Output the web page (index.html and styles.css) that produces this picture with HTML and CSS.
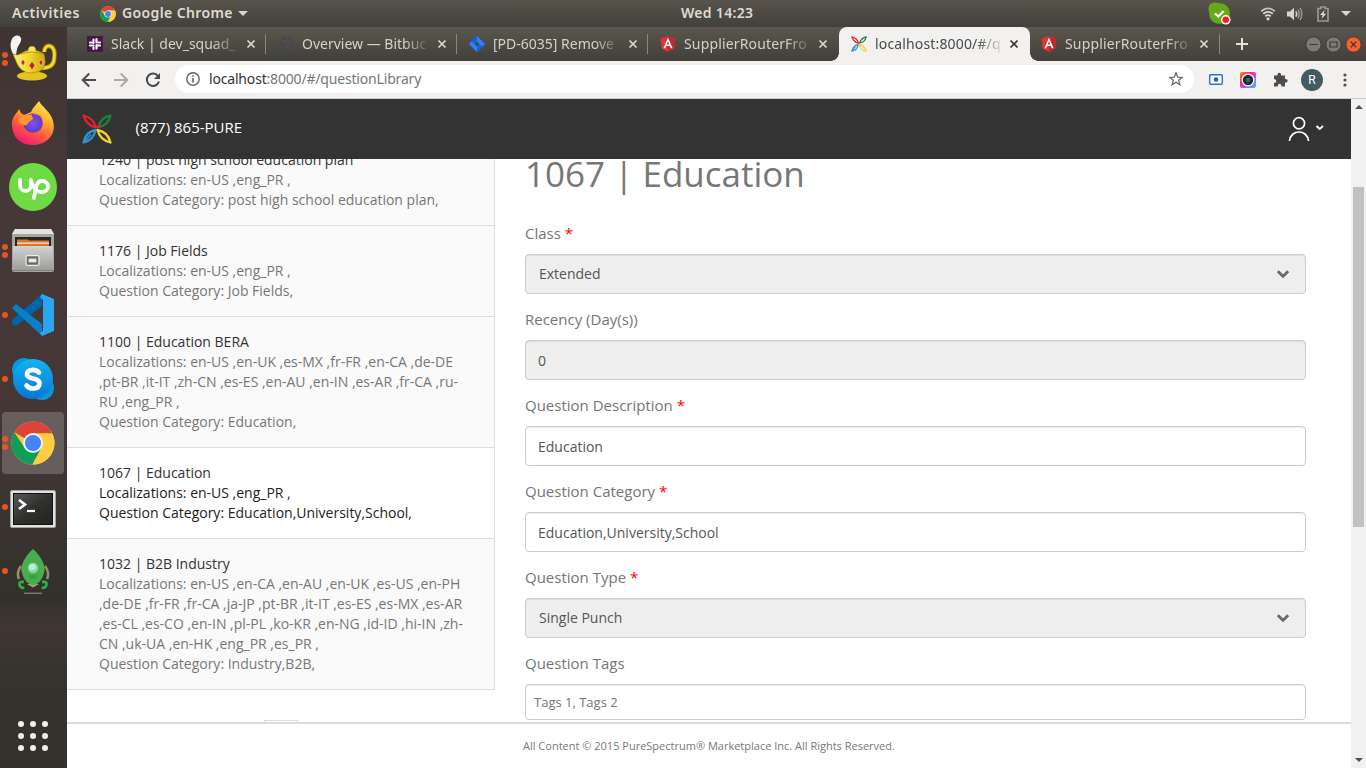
FILE: index.html
```html
<!DOCTYPE html>
<html lang="en">
<head>
<meta charset="utf-8">
<title>Question Library</title>
<link rel="stylesheet" href="styles.css">
</head>
<body>
<svg class="defs" width="0" height="0">
  <defs>
    <symbol id="chrome" viewBox="0 0 48 48">
      <circle cx="24" cy="24" r="23.5" fill="#fcc93c"/>
      <path d="M24 24 3.6 12.3A23.5 23.5 0 0 1 44.4 12.6L44.7 13.5H24Z" fill="#db4437"/>
      <path d="M3.6 12.3A23.5 23.5 0 0 0 23.5 47.5L33.2 29.5 14.8 29.3Z" fill="#0f9d58"/>
      <path d="M24 13.5H45A23.5 23.5 0 0 1 23.5 47.5L33.2 29.5Z" fill="#ffcd40"/>
      <circle cx="24" cy="24" r="10.8" fill="#f5f5f5"/>
      <circle cx="24" cy="24" r="8.8" fill="#4285f4"/>
    </symbol>
    <symbol id="spectrum" viewBox="0 0 30 30">
      <g fill="none" stroke-width="2.3" stroke-linejoin="round">
        <path d="M13.500 16Q4 17.500 1.500 28.500 11.500 26.500 13.500 16Z" stroke="#2b93d1"/>
        <path d="M2 28 9 20.500" stroke="#2b93d1" stroke-width="1.800"/>
        <path d="M15.500 16Q18 26 28.500 28.500 26 18 15.500 16Z" stroke="#f2d22e"/>
        <path d="M28.500 1.500Q18.500 3.500 16.500 13 26 11.500 28.500 1.500Z" stroke="#1d803c"/>
        <path d="M13.500 12.500Q11.500 4 1.500 1.500 5 11 12 13 15.500 13.800 18.500 11.500" stroke="#e2202c"/>
      </g>
    </symbol>
    <symbol id="angular" viewBox="0 0 16 16">
      <path d="M8 0 15.5 2.6 14.3 12.5 8 16 1.7 12.5.5 2.6Z" fill="#e23237"/>
      <path d="M8 0 15.5 2.6 14.3 12.5 8 16Z" fill="#b52e31"/>
      <path d="M8 1.8 3.4 12.2h1.8l.9-2.3h3.8l.9 2.3h1.8ZM8 5.2 9.3 8.4H6.7Z" fill="#fff" fill-rule="evenodd"/>
    </symbol>
    <symbol id="close" viewBox="0 0 10 10"><path d="M1.5 1.5 8.5 8.5M8.5 1.5 1.5 8.5" fill="none" stroke="currentColor" stroke-width="1.7"/></symbol>
    <symbol id="chevron" viewBox="0 0 14 10"><path d="M1.8 2.2 7 7.2 12.2 2.2" fill="none" stroke="#666a70" stroke-width="2.8"/></symbol>
    <linearGradient id="gold" x1="0" x2="1"><stop offset="0" stop-color="#fbf07a"/><stop offset=".5" stop-color="#f0d829"/><stop offset="1" stop-color="#c9a90c"/></linearGradient>
    <linearGradient id="fox" x1=".8" y1="0" x2=".3" y2="1"><stop offset="0" stop-color="#fff14f"/><stop offset=".35" stop-color="#ffb02e"/><stop offset=".65" stop-color="#ff5e3a"/><stop offset="1" stop-color="#f2127b"/></linearGradient>
    <radialGradient id="globe"><stop offset="0" stop-color="#8a4df0"/><stop offset="1" stop-color="#5b3cc4"/></radialGradient>
    <linearGradient id="metal" y1="0" x2="0" y2="1"><stop offset="0" stop-color="#d2d2d0"/><stop offset="1" stop-color="#9b9b99"/></linearGradient>
    <linearGradient id="sky" y1="0" x2="0" y2="1"><stop offset="0" stop-color="#13b4f1"/><stop offset="1" stop-color="#0778d4"/></linearGradient>
    <linearGradient id="screen" x2="1" y2="1"><stop offset="0" stop-color="#5b5b59"/><stop offset=".5" stop-color="#30302e"/><stop offset="1" stop-color="#222"/></linearGradient>
    <linearGradient id="rainbow" x2="1" y2="1"><stop offset="0" stop-color="#ff8a00"/><stop offset=".3" stop-color="#ff2f4e"/><stop offset=".55" stop-color="#e236e8"/><stop offset="1" stop-color="#19d8ee"/></linearGradient>
  </defs>
</svg>

<div class="desktop">
  <header class="topbar">
    <div class="topbar-left">
      <span class="activities">Activities</span>
      <svg class="app-icon" width="16" height="16"><use href="#chrome"/></svg>
      <span class="app-name">Google Chrome</span>
      <i class="caret"></i>
    </div>
    <span class="clock">Wed 14:23</span>
    <div class="tray">
      <svg width="23" height="23" viewBox="0 0 23 23"><rect x=".5" y=".5" width="13" height="13" rx="6" fill="#65a91a"/><circle cx="11.5" cy="11.5" r="10.5" fill="#65a91a"/><path d="M7 11.5 10.3 14.5 15.7 9" stroke="#fff" stroke-width="2.2" fill="none"/><circle cx="17.8" cy="17.8" r="4.8" fill="#fff"/><circle cx="17.8" cy="17.8" r="3.3" fill="#f0201c"/></svg>
      <svg class="wifi" width="16" height="14" viewBox="0 0 16 14" fill="none" stroke="#d8d6d0" stroke-width="1.8"><path d="M1.2 4.2Q8-1.4 14.8 4.2" opacity=".85"/><path d="M3.2 6.8Q8 3 12.8 6.8"/><path d="M5.2 9.2Q8 7 10.8 9.2"/><circle cx="8" cy="11.8" r="1.6" fill="#d8d6d0" stroke="none"/></svg>
      <svg class="volume" width="16" height="14" viewBox="0 0 16 14"><path d="M0 4.5H3L7 .8V13.2L3 9.5H0Z" fill="#d8d6d0"/><path d="M8.8 4.3Q10.6 7 8.8 9.7" stroke="#d8d6d0" stroke-width="1.5" fill="none"/><path d="M11 2.6Q13.4 7 11 11.4M13.2 1Q16.4 7 13.2 13" stroke="#99968f" stroke-width="1.5" fill="none"/></svg>
      <svg class="battery" width="12" height="16" viewBox="0 0 12 16"><path d="M1 2.5H3.8V1H8.2V2.5H11V15H1Z" fill="none" stroke="#9a9891" stroke-width="1.7"/><path d="M7.8 4 3 9.1H5.6L4.4 13 9.2 7.8H6.6Z" fill="#dfddd6"/></svg>
      <i class="caret"></i>
    </div>
  </header>

  <div class="workspace">
    <nav class="dock">
      <div class="slot two">
        <svg width="50" height="50" viewBox="0 0 50 50"><path d="M5 20C2 14 2 9 4 5 6 1 11 0 13 4 14 8 10 11 9 15L8 21Z" fill="#f4f4f4"/><path d="M36 18Q37 11 42 12 48 14 46 26 45 34 34 34" fill="none" stroke="#a8890a" stroke-width="4.5"/><path d="M36 18Q37 11 42 12 48 14 46 26 45 34 34 34" fill="none" stroke="#f1da2f" stroke-width="2.8"/><ellipse cx="24" cy="42" rx="15" ry="4.5" fill="#e2c61e"/><path d="M5 20Q10 22 12 20 24 12 36 20 41 38 24 39 12 39 8 27Z" fill="url(#gold)" stroke="#ad8d0a" stroke-width=".7"/><circle cx="24" cy="16" r="3.7" fill="#f4e463"/><path d="M13 20Q24 16 35 20" stroke="#b69810" fill="none"/><path d="m15 25 2 3.5-2 3.5-2-3.5ZM24 27l3 4.5-3 4.5-3-4.5ZM33 25l2 3.5-2 3.5-2-3.5Z" fill="#c8202b" stroke="#f7eb91" stroke-width=".6"/></svg>
      </div>
      <div class="slot">
        <svg width="44" height="46" viewBox="0 0 44 46"><path d="M1 24C1 16 5 15 8 9L10 13 13 15 20 12C22 7 26 4 28 1 31 7 40 12 42 21 46 36 34 45 22 45 8 45 1 36 1 24Z" fill="url(#fox)"/><circle cx="22" cy="23" r="9.800" fill="url(#globe)"/><path d="M24 13Q31 13 33 20 28 13 20 14Q22 18 22 19 16 23 16 25 10 26 7 20 10 16 21 14Z" fill="#ff9730"/></svg>
      </div>
      <div class="slot">
        <svg width="48" height="48" viewBox="0 0 48 48"><circle cx="24" cy="24" r="24" fill="#6fda44"/><path d="M11 17V22C11 30 22 30 22 22V17C25 27 28 29 33 29 41 29 41 18 33 18 27 18 27 25 25 35" fill="none" stroke="#fff" stroke-width="3.8" stroke-linecap="round" stroke-linejoin="round"/></svg>
      </div>
      <div class="slot two">
        <svg width="44" height="46" viewBox="0 0 44 46"><path d="M4 1H40L43 6V42Q43 44 41 44H3Q1 44 1 42V6Z" fill="#a5a5a3"/><path d="M4 1H40L43 6H1Z" fill="#e2e2e0"/><path d="M4 9H40V19H4Z" fill="#262624"/><path d="M6 11.500H17L18 12.500H38V19H6Z" fill="#d9762a"/><path d="M6 14.500H38V15.800H6Z" fill="#f6e5d4"/><path d="M2 18H42V42Q42 43 41 43H3Q2 43 2 42Z" fill="url(#metal)"/><path d="M1 42.500H43" stroke="#81817f"/><rect x="15" y="27.500" width="13" height="10" rx="1.500" fill="#888" stroke="#ededeb" stroke-width="1.200"/><rect x="17" y="30" width="9" height="5" fill="#e9e9e7" stroke="#4a4a48"/></svg>
      </div>
      <div class="slot one">
        <svg width="44" height="44" viewBox="0 0 44 44"><path d="M1 27 31 1V13L5 33 1 31Z" fill="#0065a9"/><path d="M1 15 5 11 31 31V43Z" fill="#0a7ec9"/><path d="M31 1 43 6V38L31 43 29 40 32 38V7L29 4Z" fill="#2aa6f0"/></svg>
      </div>
      <div class="slot one">
        <svg width="44" height="44" viewBox="0 0 44 44"><circle cx="13" cy="13" r="12" fill="#0799db"/><circle cx="31" cy="31" r="12" fill="#0799db"/><circle cx="22" cy="22" r="20" fill="url(#sky)"/><path d="M28 15.500C24 11.500 16 12 16 17.500 16 23 28.500 20 28.500 26.500 28.500 32.500 19 33 15.500 28.500" fill="none" stroke="#fff" stroke-width="4.600" stroke-linecap="round"/></svg>
      </div>
      <div class="slot two active"><svg width="44" height="44"><use href="#chrome"/></svg></div>
      <div class="slot one terminal">
        <svg width="46" height="38" viewBox="0 0 46 38"><rect x=".5" y=".5" width="45" height="37" rx="1.500" fill="#e2e2e0" stroke="#a2a2a0"/><rect x="3.500" y="3.500" width="39" height="31" fill="url(#screen)" stroke="#111"/><path d="M9 10 15 14.500 9 19" stroke="#fff" stroke-width="2.600" fill="none"/><path d="M17 21H25" stroke="#fff" stroke-width="2.200"/></svg>
      </div>
      <div class="slot one">
        <svg width="36" height="46" viewBox="0 0 36 46"><path d="M6 18Q1 24 4 31M30 18Q35 24 32 31" stroke="#9b8d62" stroke-width="2.600" fill="none"/><path d="M12 36 18 39.500 24 36Z" fill="#b3a276"/><path d="M18 1C25 7 32 18 29 25 27 33 22 37 18 37S9 33 7 25C4 18 11 7 18 1Z" fill="#48ad4c"/><circle cx="18" cy="20" r="5.200" fill="#80d8a6"/><circle cx="17.500" cy="19" r="3.300" fill="#b8eddb"/><path d="M14 28H22M15 30H21" stroke="#267c31" stroke-dasharray="1.500 1"/><path d="M9 34Q3 33 5 38 7 41 9 39M27 34Q33 33 31 38 29 41 27 39" fill="none" stroke="#2fae4c" stroke-width="2.800"/><path d="M9 45.200H27" stroke="#888780" stroke-width="1.200"/></svg>
      </div>
      <div class="apps"><i></i><i></i><i></i><i></i><i></i><i></i><i></i><i></i><i></i></div>
    </nav>

    <div class="browser">
      <div class="tabs">
        <div class="tab"><svg class="fav" viewBox="0 0 16 16"><path d="M0 0H16V16H0Z" fill="#4a154b"/><path d="M6.500 3.500V7M3 6.500H5M9.500 3V6.500M11.500 6.500H13M3 9.500H6.500M9.500 9.500H13M6.500 11.500V13M9.500 9V12.500" stroke="#fff" stroke-width="2.100" stroke-linecap="round"/></svg><span>Slack | dev_squad_</span><svg class="x"><use href="#close"/></svg></div>
        <div class="tab"><svg class="fav" viewBox="0 0 16 16"><circle cx="8" cy="8" r="7" fill="#46484a"/><path d="M3 5Q8 3 8 8T12 12M9 2Q8 6 14 6" stroke="#4f4f4d" fill="none" stroke-width="2"/></svg><span>Overview — Bitbuc</span><svg class="x"><use href="#close"/></svg></div>
        <div class="tab"><svg class="fav" viewBox="0 0 16 16"><path d="M8 0 16 8 8 16 0 8Z" fill="#2684ff"/><path d="M8 0V5.300L5.300 8 2 4.700ZM8 16V10.700L10.700 8 14 11.300Z" fill="#1262dc"/><path d="M8 5.500 10.500 8 8 10.500 5.500 8Z" fill="#4b4943"/></svg><span>[PD-6035] Remove</span><svg class="x"><use href="#close"/></svg></div>
        <div class="tab plain"><svg class="fav"><use href="#angular"/></svg><span class="wide">SupplierRouterFro</span><svg class="x"><use href="#close"/></svg></div>
        <div class="tab current"><svg class="fav"><use href="#spectrum"/></svg><span class="wide">localhost:8000/#/q</span><svg class="x"><use href="#close"/></svg></div>
        <div class="tab last"><svg class="fav"><use href="#angular"/></svg><span class="wide">SupplierRouterFro</span><svg class="x"><use href="#close"/></svg></div>
        <svg class="plus" width="12" height="12" viewBox="0 0 12 12"><path d="M6 0V12M0 6H12" stroke="#e6e3dc" stroke-width="2"/></svg>
        <div class="window-buttons">
          <svg viewBox="0 0 17 17"><circle cx="8.500" cy="8.500" r="7.700" fill="#7c7a73" stroke="#393833"/><path d="M4.500 8.500H12.500" stroke="#3b3a36"/></svg>
          <svg viewBox="0 0 17 17"><circle cx="8.500" cy="8.500" r="7.700" fill="#7c7a73" stroke="#393833"/><path d="M5 6H12V11H5Z" stroke="#3b3a36" fill="none" stroke-width="1.200"/></svg>
          <svg viewBox="0 0 17 17"><circle cx="8.500" cy="8.500" r="7.700" fill="#ee6435" stroke="#5a3022"/><path d="M5.700 5.700 11.300 11.300M11.300 5.700 5.700 11.300" stroke="#592a1a" stroke-width="1.200"/></svg>
        </div>
      </div>

      <div class="toolbar">
        <div class="navigation">
          <svg width="16" height="16" viewBox="0 0 16 16" fill="none" stroke="#4b4b4b" stroke-width="2"><path d="M15 8H2M8.200 1.500 1.700 8 8.200 14.500"/></svg>
          <svg width="16" height="16" viewBox="0 0 16 16" fill="none" stroke="#aaa9a7" stroke-width="2"><path d="M1 8H14M7.800 1.500 14.300 8 7.800 14.500"/></svg>
          <svg width="16" height="16" viewBox="0 0 16 16"><path d="M13.200 4.200A6.200 6.200 0 1 0 14 9.500" fill="none" stroke="#4b4b4b" stroke-width="2"/><path d="M15 1V7H9Z" fill="#4b4b4b"/></svg>
        </div>
        <div class="address">
          <svg width="14" height="14" viewBox="0 0 14 14"><circle cx="7" cy="7" r="6.200" fill="none" stroke="#5f6368" stroke-width="1.400"/><path d="M7 6V10.500M7 3.200V4.800" stroke="#5f6368" stroke-width="1.600"/></svg>
          <span class="url"><b>localhost</b>:8000/#/questionLibrary</span>
          <svg class="star" width="14" height="14" viewBox="0 0 14 14"><path d="M7 1 8.700 5.100 13.200 5.400 9.700 8.300 10.900 12.700 7 10.300 3.100 12.700 4.300 8.300.8 5.400 5.300 5.100Z" fill="none" stroke="#5f6368" stroke-width="1.200"/></svg>
        </div>
        <div class="extensions">
          <svg width="14" height="11" viewBox="0 0 14 11"><rect x=".7" y=".7" width="12.600" height="9.600" rx="1.200" fill="#fff" stroke="#1a73f0" stroke-width="1.400"/><circle cx="7" cy="5.500" r="2.300" fill="#3e50c8"/></svg>
          <svg width="16" height="16" viewBox="0 0 16 16"><rect width="16" height="16" rx="2" fill="url(#rainbow)"/><circle cx="8" cy="8" r="6.500" fill="#fff"/><circle cx="8" cy="8" r="5.200" fill="#26323a"/><circle cx="8" cy="8" r="3" fill="#4c5963" stroke="#161e23"/></svg>
          <svg width="15" height="15" viewBox="0 0 15 15"><path d="M1 3.500H4.500C3.800-.3 8.700-.3 8 3.500H12V7C15.500 6.500 15.500 11 12 10.500V14.500H8.500C8.500 10.700 4.800 10.700 4.800 14.500H1V11C4 11 4 7 1 7Z" fill="#4d4d4d"/></svg>
          <span class="avatar">R</span>
          <svg width="4" height="14" viewBox="0 0 4 14" fill="#505050"><circle cx="2" cy="2" r="1.600"/><circle cx="2" cy="7" r="1.600"/><circle cx="2" cy="12" r="1.600"/></svg>
        </div>
      </div>

      <div class="viewport">
        <div class="page">
          <div class="page-header">
            <svg class="brand" width="30" height="30"><use href="#spectrum"/></svg>
            <span>(877) 865-PURE</span>
            <svg class="account" width="36" height="26" viewBox="0 0 36 26" fill="none" stroke="#fff"><circle cx="11" cy="7.300" r="5.600" stroke-width="1.700"/><path d="M1.500 25C2.500 13 19.500 13 20.500 25" stroke-width="1.700"/><path d="M28.500 10 31.700 13 35 10" stroke-width="1.900"/></svg>
          </div>
          <main class="content">
            <aside class="sidebar">
              <ul class="questions">
                <li><strong>1240 | post high school education plan</strong><p>Localizations: en-US ,eng_PR ,<br>Question Category: post high school education plan,</p></li>
                <li><strong>1176 | Job Fields</strong><p>Localizations: en-US ,eng_PR ,<br>Question Category: Job Fields,</p></li>
                <li><strong>1100 | Education BERA</strong><p>Localizations: en-US ,en-UK ,es-MX ,fr-FR ,en-CA ,de-DE<br>,pt-BR ,it-IT ,zh-CN ,es-ES ,en-AU ,en-IN ,es-AR ,fr-CA ,ru-<br>RU ,eng_PR ,<br>Question Category: Education,</p></li>
                <li class="selected"><strong>1067 | Education</strong><p>Localizations: en-US ,eng_PR ,<br>Question Category: Education,University,School,</p></li>
                <li><strong>1032 | B2B Industry</strong><p>Localizations: en-US ,en-CA ,en-AU ,en-UK ,es-US ,en-PH<br>,de-DE ,fr-FR ,fr-CA ,ja-JP ,pt-BR ,it-IT ,es-ES ,es-MX ,es-AR<br>,es-CL ,es-CO ,en-IN ,pl-PL ,ko-KR ,en-NG ,id-ID ,hi-IN ,zh-<br>CN ,uk-UA ,en-HK ,eng_PR ,es_PR ,<br>Question Category: Industry,B2B,</p></li>
              </ul>
              <div class="pager"></div>
            </aside>
            <section class="editor">
              <h1>1067 | Education</h1>
              <div class="field"><label>Class <em>*</em></label><div class="control select">Extended<svg width="14" height="10"><use href="#chevron"/></svg></div></div>
              <div class="field"><label>Recency (Day(s))</label><div class="control disabled">0</div></div>
              <div class="field"><label>Question Description <em>*</em></label><div class="control">Education</div></div>
              <div class="field"><label>Question Category <em>*</em></label><div class="control">Education,University,School</div></div>
              <div class="field"><label>Question Type <em>*</em></label><div class="control select">Single Punch<svg width="14" height="10"><use href="#chevron"/></svg></div></div>
              <div class="field"><label>Question Tags</label><div class="control tags">Tags 1, Tags 2</div></div>
            </section>
          </main>
          <footer>All Content © 2015 PureSpectrum® Marketplace Inc. All Rights Reserved.</footer>
        </div>
        <div class="scrollbar"><i class="up"></i><div class="track"><div class="thumb"></div></div><i class="down"></i></div>
      </div>
    </div>
  </div>
</div>
</body>
</html>
```
FILE: styles.css
```css
* { box-sizing: border-box; }
body { margin: 0; font-family: "Open Sans", "Noto Sans", sans-serif; }
svg { display: block; flex: none; }
.defs { position: absolute; }
.desktop { width: 1366px; height: 768px; overflow: hidden; display: flex; flex-direction: column; }

.topbar { height: 27px; flex: none; display: grid; grid-template-columns: 681px auto 1fr; align-items: center; background: linear-gradient(#58544c, #41403b); color: #dfdbd2; font: 600 14px/26px "Noto Sans", sans-serif; }
.topbar-left { display: flex; align-items: center; padding-left: 12px; }
.app-icon { margin-left: 20px; }
.app-name { margin-left: 6px; width: 111px; white-space: nowrap; letter-spacing: .38px; }
.activities { width: 68px; letter-spacing: .55px; }
.clock { width: 76px; white-space: nowrap; letter-spacing: .3px; }
.activities, .app-name, .clock { margin-top: -2px; }
.caret { width: 0; height: 0; border: 5px solid transparent; border-top-color: #d8d6d0; border-bottom: 0; }
.topbar-left .caret { margin-left: 5px; }
.tray { display: flex; align-items: center; justify-content: flex-end; padding-right: 15px; }
.wifi { margin-left: 29px; }
.volume { margin-left: 11px; }
.battery { margin: 0 12px 0 14px; }

.workspace { flex: 1; display: flex; min-height: 0; }
.dock { width: 67px; flex: none; background: linear-gradient(#403432, #453836 18%, #443735 50%, #3e3532 62%, #32312c 77%, #403632 81%, #35332e 88%, #32312c); display: flex; flex-direction: column; }
.slot { position: relative; height: 64px; flex: none; padding-right: 1px; display: flex; align-items: center; justify-content: center; }
.slot svg { position: relative; }
.slot.terminal svg { margin-top: 3px; }
.slot.one::before, .slot.two::before { content: ""; position: absolute; z-index: 2; left: 2px; top: 29px; width: 6px; height: 6px; border-radius: 50%; background: #e95420; }
.slot.two::before { top: 25px; box-shadow: 0 8px #e95420; }
.slot.active::after { content: ""; position: absolute; left: 2px; top: 1px; width: 62px; height: 62px; border-radius: 4px; background: rgba(255,255,255,.2); }
.slot.active svg { z-index: 1; }
.apps { margin: auto auto 17px 18px; display: grid; grid-template-columns: repeat(3, 6px); gap: 6px; }
.apps i { width: 6px; height: 6px; border-radius: 50%; background: #f0efec; }

.browser { flex: 1; min-width: 0; display: flex; flex-direction: column; }
.tabs { height: 34px; flex: none; display: flex; align-items: center; padding-left: 8px; background: linear-gradient(#5b574e, #403f3a); }
.tab { width: 191px; height: 34px; flex: none; display: flex; align-items: center; padding-left: 12px; color: #d6d2c8; font: 14px/34px "Noto Sans", sans-serif; background: linear-gradient(#8a877f, #8a877f) right 7px / 1px 20px no-repeat; }
.tab.plain { background: none; }
.tab.last { width: 190px; padding-left: 11px; }
.fav { width: 16px; height: 16px; }
.tab span { margin-left: 8px; width: 127px; white-space: nowrap; mask-image: linear-gradient(to right, #000 80%, transparent 102%); }
.tab .wide { letter-spacing: .15px; }
.x { width: 10px; height: 10px; margin-left: 8px; color: #dedad1; }
.wide + .x { margin-left: 7px; }
.tab.current { position: relative; background: #f2f1f0; color: #4a4a4a; border-radius: 8px 8px 0 0; }
.tab.current::before, .tab.current::after { content: ""; position: absolute; bottom: 0; width: 8px; height: 8px; }
.tab.current::before { left: -8px; background: radial-gradient(circle at 0 0, transparent 7.5px, #f2f1f0 8px); }
.tab.current::after { right: -8px; background: radial-gradient(circle at 100% 0, transparent 7.5px, #f2f1f0 8px); }
.current .x { color: #333; }
.plus { margin-left: 16px; }
.window-buttons { display: flex; gap: 3px; margin-left: auto; padding-right: 4px; }
.window-buttons svg { width: 17px; height: 17px; }

.toolbar { height: 38px; flex: none; display: flex; align-items: center; background: #f2f1f0; border-bottom: 1px solid #c9cccb; }
.navigation { display: flex; gap: 16px; padding-left: 14px; }
.address { height: 28px; width: 1019px; margin: -1px 0 0 14px; padding: 0 11px; display: flex; align-items: center; background: #fff; border-radius: 14px; }
.url { margin-left: 9px; color: #74777a; font: 14px/28px "Noto Sans", sans-serif; letter-spacing: -.18px; }
.url b { color: #333; font-weight: 400; }
.star { margin-left: auto; }
.extensions { flex: 1; display: flex; align-items: center; padding-left: 15px; }
.extensions svg:nth-child(2) { margin-left: 17px; }
.extensions svg:nth-child(3) { margin-left: 17px; }
.avatar { width: 22px; height: 22px; margin: 0 20px 0 13px; border-radius: 50%; background: #455a64; color: #fff; font: 12px/22px Roboto, sans-serif; text-align: center; }

.viewport { flex: 1; min-height: 0; display: flex; }
.page { width: 1284px; display: flex; flex-direction: column; background: #fff; }
.page-header { height: 60px; flex: none; display: flex; align-items: center; padding: 0 27px 0 15px; background: #333; color: #fff; font-size: 15px; line-height: 20px; }
.page-header span { margin: -5px 0 0 23.5px; }
.account { margin-left: auto; }
.content { flex: 1; min-height: 0; overflow: hidden; display: flex; }
.sidebar { width: 428px; flex: none; }
.questions { list-style: none; margin: -24px 0 0; padding: 0; border-right: 1px solid #ddd; font-size: 14px; line-height: 20px; }
.questions li { padding: 15px 0 15px 32px; background: #fafafa; border-bottom: 1px solid #ddd; color: #777; white-space: nowrap; }
.questions strong { display: block; font-weight: 400; color: #333; }
.questions p { margin: 0; }
.questions .selected { background: #fff; color: #222; }
.pager { width: 34px; height: 34px; margin: 30px 0 0 197px; border: 1px solid #ddd; }
.editor { width: 781px; margin-left: 30px; }
h1 { margin: -5px 0 29px; color: #777; font-size: 35px; line-height: 40px; font-weight: 400; }
.field { margin-bottom: 16px; }
.field label { display: block; margin-bottom: 11px; color: #757575; font-size: 15px; line-height: 20px; }
.field + .field { margin-top: -1px; }
.field em { color: #f00; font-style: normal; }
.control { height: 40px; display: flex; align-items: center; padding: 2px 12px 0; border: 1px solid #ccc; border-radius: 4px; background: #fff; box-shadow: inset 0 1px 1px rgba(0,0,0,.075); color: #555; font-size: 14px; line-height: 20px; }
.control.select, .control.disabled { background: #eee; }
.control.select { padding: 0 15px 0 13px; justify-content: space-between; }
.control.tags { height: 36px; padding: 0 8px; font-size: 13px; color: #757575; }
footer { height: 46px; flex: none; padding-left: 456px; border-top: 2px solid #ddd; color: #777; font-size: 11px; line-height: 43px; }

.scrollbar { width: 15px; background: #f1f1f1; display: flex; flex-direction: column; align-items: center; }
.scrollbar i { width: 0; height: 0; border: 4px solid transparent; }
.scrollbar .up { margin-top: 6px; border-top: 0; border-bottom: 4px solid #505050; }
.scrollbar .down { margin-bottom: 6px; border-bottom: 0; border-top: 4px solid #505050; }
.track { flex: 1; width: 11px; padding-top: 78px; }
.thumb { height: 340px; background: #c1c1c1; }
```
